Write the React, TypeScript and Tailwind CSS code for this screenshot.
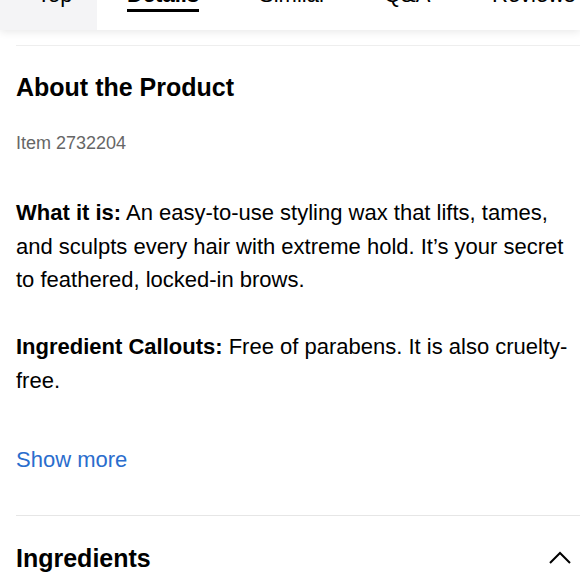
import React from 'react';

const tabs = [
  { name: 'Top', box: 'w-[97px] pl-[37px] bg-[#f4f4f6]', active: false },
  { name: 'Details', box: 'w-[131px] pl-[30px]', active: true },
  { name: 'Similar', box: 'w-[126px] pl-[31px]', active: false },
  { name: 'Q&A', box: 'w-[107px] pl-[30px]', active: false },
  { name: 'Reviews', box: 'w-[119px] pl-[31px]', active: false },
];

function TabBar() {
  return (
    <div className="relative z-10 h-[30px] overflow-hidden bg-white shadow-[0_2px_8px_rgba(0,0,0,0.09)]">
      <div className="-mt-[30px] flex h-[60px]">
        {tabs.map((tab) => (
          <div key={tab.name} className={`shrink-0 pt-[12px] ${tab.box}`}>
            <span className={`relative block w-max text-[22px] leading-[26px] ${tab.active ? 'font-bold' : ''}`}>
              {tab.name}
              {tab.active && <span className="absolute -bottom-[4px] left-0 right-0 h-[3px] bg-black" />}
            </span>
          </div>
        ))}
      </div>
    </div>
  );
}

export default function App() {
  return (
    <div className="h-[580px] w-[580px] overflow-hidden bg-white font-['Liberation_Sans',Arial,sans-serif] text-black">
      <TabBar />

      <div className="pl-4">
        <div className="mt-[15px] h-px bg-[#eeeeee]" />

        <div className="pr-[4px]">
          <h2 className="mt-[25px] text-[25px] font-bold leading-[32px]">About the Product</h2>
          <p className="mt-[28px] text-[18px] leading-[24px] text-[#666666]">Item 2732204</p>

          <p className="mt-[41px] text-[22px] leading-[33.5px]">
            <span className="font-bold">What it is:</span> An easy-to-use styling wax that lifts, tames,
            and sculpts every hair with extreme hold. It’s your secret to feathered, locked-in brows.
          </p>

          <p className="mt-[33.5px] text-[22px] leading-[33.5px]">
            <span className="font-bold">Ingredient Callouts:</span> Free of parabens. It is also cruelty-free.
          </p>

          <p className="mt-[46px] text-[22px] leading-[33.5px] text-[#2a6dcd]">Show more</p>
        </div>

        <div className="mt-[38px] h-px bg-[#e6e6e6]" />

        <div className="mt-[26px] flex items-center justify-between pr-[9px]">
          <h2 className="text-[25px] font-bold leading-[32px]">Ingredients</h2>
          <svg width="22" height="13" viewBox="0 0 22 13" fill="none" stroke="black" strokeWidth="2">
            <path d="M1 12 L11 2 L21 12" />
          </svg>
        </div>
      </div>
    </div>
  );
}
